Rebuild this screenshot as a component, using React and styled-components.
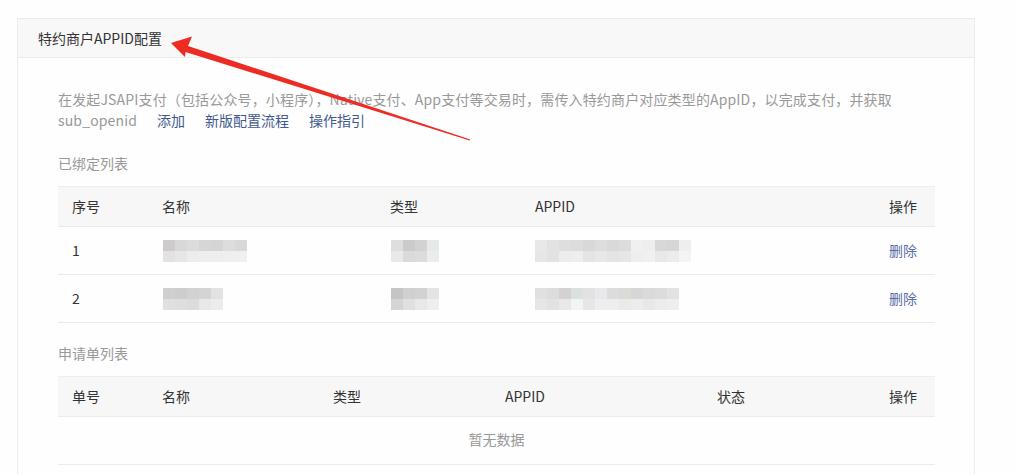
import React from "react";
import styled, { createGlobalStyle } from "styled-components";

const Global = createGlobalStyle`
  html, body { margin: 0; padding: 0; background: #fefefe; }
  body { font-family: "Noto Sans CJK SC", "Noto Sans", sans-serif; font-size: 14px; color: #333; }
`;

const Page = styled.div`
  position: relative;
  padding: 18px 0 0 17px;
  height: 474px;
  box-sizing: border-box;
  overflow: hidden;
`;

const Card = styled.section`
  width: 958px;
  border: 1px solid #ebebeb;
  background: #fefefe;
  box-sizing: border-box;
`;

const CardHeader = styled.header`
  height: 39px;
  display: flex;
  align-items: center;
  padding-left: 20px;
  background: #f8f8f8;
  border-bottom: 1px solid #ececec;
  color: #333;
  font-size: 14px;
  box-sizing: border-box;
`;

const CardBody = styled.div`
  padding: 31px 39px 40px 40px;
`;

const Desc = styled.p`
  margin: 0;
  line-height: 21px;
  color: #999;
  font-size: 14px;
  letter-spacing: 0.15px;
`;

const Link = styled.a`
  color: #42598f;
  margin-left: 20px;
  text-decoration: none;
  letter-spacing: 0;
`;

const SectionLabel = styled.div`
  color: #999;
  line-height: 21px;
  margin: ${(p) => p.$top}px 0 12px;
`;

const Table = styled.div`
  width: 877px;
  border-top: 1px solid #eeeeee;
`;

const Row = styled.div`
  display: grid;
  grid-template-columns: ${(p) => p.$cols};
  align-items: center;
  height: ${(p) => (p.$head ? 40 : 48)}px;
  box-sizing: border-box;
  padding: 0 18px 0 14px;
  background: ${(p) => (p.$head ? "#f7f7f7" : "transparent")};
  border-bottom: 1px solid #ebebeb;
  color: #333;
`;

const Cell = styled.div`
  text-align: ${(p) => (p.$right ? "right" : "left")};
  white-space: nowrap;
  line-height: 20px;
  margin-top: -2px;
`;

const Empty = styled.div`
  height: 48px;
  display: flex;
  align-items: center;
  justify-content: center;
  color: #999;
  border-bottom: 1px solid #ebebeb;
  padding-bottom: 3px;
  box-sizing: border-box;
`;

const Action = styled.a`
  color: #5a6ea6;
  text-decoration: none;
`;

const Mosaic = styled.div`
  display: grid;
  grid-template-columns: repeat(${(p) => p.$n}, 12px);
  grid-auto-rows: 11px;
  margin-left: ${(p) => p.$offset || 0}px;
  margin-top: 2px;
  width: max-content;
`;

const Block = styled.span`
  background: ${(p) => p.$c};
`;

const Overlay = styled.svg`
  position: absolute;
  left: 0;
  top: 0;
  pointer-events: none;
`;

const blur = {
  name1: [
    ["#cdcbcc", "#d8d8d8", "#dcdcdc", "#d6d6d6", "#d4d6d6", "#dddddd", "#d8d8d8"],
    ["#e2e2e2", "#e6e6e6", "#ededed", "#eeeeee", "#eeeeee", "#efefef", "#f0f0f0"],
  ],
  type1: [
    ["#dedede", "#cbcbcb", "#d2d2d2", "#e6e9ea"],
    ["#e9e9e9", "#dadada", "#dcdcdc", "#ececec"],
  ],
  appid1: [
    ["#e8e8e8", "#e2e2e2", "#dedede", "#dcdcdc", "#d8d8d8", "#dddddd", "#d9d9d9", "#dcdcdc", "#f0f0f0", "#eeeeee", "#d8d8d8", "#d6d6d6", "#eeeeee"],
    ["#e6e6e6", "#e2e2e2", "#ececec", "#eeeeee", "#e4e4e4", "#e8e8e8", "#e4e4e4", "#e6e6e6", "#eeeeee", "#f0f0f0", "#e8e8e8", "#ececec", "#f4f4f4"],
  ],
  name2: [
    ["#cfcfcf", "#cdcdcd", "#d2d2d2", "#d4d4d4", "#e2e2e2"],
    ["#e0e0e0", "#dedede", "#dcdcdc", "#e8e8e8", "#ececec"],
  ],
  type2: [
    ["#c4c6c4", "#d0d0d0", "#d2d2d2", "#e4e4e4"],
    ["#d4d6d4", "#e0e0e0", "#e8e8e8", "#eeeeee"],
  ],
  appid2: [
    ["#e0e0e0", "#dcdcdc", "#d2d2d2", "#dde0e2", "#e2e2e2", "#e6e8ea", "#dcdcdc", "#dadad6", "#d6d6d6", "#dadada", "#dcdcdc", "#e2e2e2"],
    ["#e6e6e6", "#e2e2e2", "#e8e8e8", "#f2f4f2", "#e6e6e6", "#eeeeee", "#eeeeee", "#eaeaea", "#ececec", "#e8e8e8", "#ececec", "#eeeeee"],
  ],
};

function Blur({ rows, offset }) {
  return (
    <Mosaic $n={rows[0].length} $offset={offset}>
      {rows.flat().map((c, i) => (
        <Block key={i} $c={c} />
      ))}
    </Mosaic>
  );
}

const bound = ["90px", "228px", "145px", "1fr", "80px"].join(" ");
const apply = ["90px", "171px", "172px", "212px", "1fr", "80px"].join(" ");

const boundRows = [
  { id: "1", name: blur.name1, type: blur.type1, appid: blur.appid1 },
  { id: "2", name: blur.name2, type: blur.type2, appid: blur.appid2 },
];

export default function App() {
  return (
    <>
      <Global />
      <Page>
        <Card>
          <CardHeader>特约商户APPID配置</CardHeader>
          <CardBody>
            <Desc>
              在发起JSAPI支付（包括公众号，小程序），Native支付、App支付等交易时，需传入特约商户对应类型的AppID，以完成支付，并获取
              <br />
              sub_openid
              <Link>添加</Link>
              <Link>新版配置流程</Link>
              <Link>操作指引</Link>
            </Desc>

            <SectionLabel $top={22}>已绑定列表</SectionLabel>
            <Table>
              <Row $head $cols={bound}>
                <Cell>序号</Cell>
                <Cell>名称</Cell>
                <Cell>类型</Cell>
                <Cell>APPID</Cell>
                <Cell $right>操作</Cell>
              </Row>
              {boundRows.map((r) => (
                <Row key={r.id} $cols={bound}>
                  <Cell>{r.id}</Cell>
                  <Cell>
                    <Blur rows={r.name} offset={1} />
                  </Cell>
                  <Cell>
                    <Blur rows={r.type} offset={1} />
                  </Cell>
                  <Cell>
                    <Blur rows={r.appid} />
                  </Cell>
                  <Cell $right>
                    <Action>删除</Action>
                  </Cell>
                </Row>
              ))}
            </Table>

            <SectionLabel $top={20}>申请单列表</SectionLabel>
            <Table>
              <Row $head $cols={apply}>
                <Cell>单号</Cell>
                <Cell>名称</Cell>
                <Cell>类型</Cell>
                <Cell>APPID</Cell>
                <Cell>状态</Cell>
                <Cell $right>操作</Cell>
              </Row>
              <Empty>暂无数据</Empty>
            </Table>
          </CardBody>
        </Card>

        <Overlay width="1018" height="474" viewBox="0 0 1018 474">
          <polygon
            fill="#ee2b22"
            points="171,43 192,36.5 188,46 470.3,139.4 469.7,140.6 185.5,52 185,57"
          />
        </Overlay>
      </Page>
    </>
  );
}
